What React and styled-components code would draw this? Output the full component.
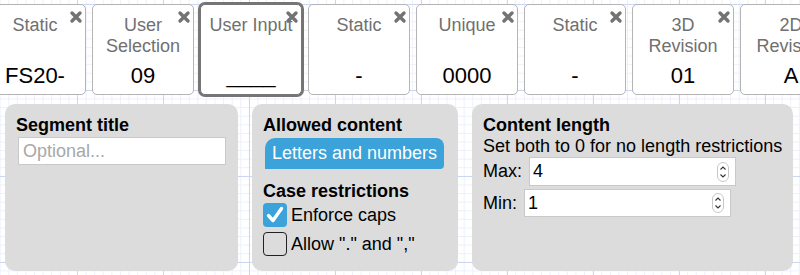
import styled, { createGlobalStyle } from "styled-components";

const GlobalStyle = createGlobalStyle`
  html, body {
    margin: 0;
    height: 100%;
  }
  body {
    font-family: "Liberation Sans", Arial, sans-serif;
    background-color: #fff;
    background-image:
      linear-gradient(#cbd6f3 1px, transparent 1px),
      linear-gradient(90deg, #cbd6f3 1px, transparent 1px),
      linear-gradient(#edf0fb 1px, transparent 1px),
      linear-gradient(90deg, #edf0fb 1px, transparent 1px);
    background-size: 86px 86px, 86px 86px, 8.6px 8.6px, 8.6px 8.6px;
    background-position: 77px 4px;
    overflow: hidden;
  }
`;

const segments = [
  { title: "Static", value: "FS20-" },
  { title: "User Selection", value: "09" },
  { title: "User Input", value: "____", selected: true },
  { title: "Static", value: "-" },
  { title: "Unique", value: "0000" },
  { title: "Static", value: "-" },
  { title: "3D Revision", value: "01" },
  { title: "2D Revision", value: "A" },
];

const Page = styled.div`
  padding-top: 4px;
`;

const SegmentRow = styled.div`
  display: flex;
  gap: 6px;
  margin-left: -16px;
`;

const Card = styled.div`
  position: relative;
  flex-shrink: 0;
  box-sizing: border-box;
  width: 102px;
  height: 91px;
  padding: 10px 6px 5px;
  display: flex;
  flex-direction: column;
  align-items: center;
  justify-content: space-between;
  background: #fff;
  border: 1px solid ${(p) => (p.$selected ? "#757575" : "#b4b4b4")};
  border-radius: 5px;
  box-shadow: ${(p) => (p.$selected ? "0 0 0 2px #757575" : "none")};
`;

const CardTitle = styled.div`
  color: #707070;
  font-size: 18px;
  line-height: 21px;
  text-align: center;
`;

const CardValue = styled.div`
  color: #000;
  font-size: 22px;
  line-height: 26px;
  white-space: nowrap;
`;

const Close = styled.svg`
  position: absolute;
  top: 4px;
  right: 1px;
`;

const PanelRow = styled.div`
  display: flex;
  gap: 14px;
  padding: 9px 0 0 5px;
`;

const Panel = styled.div`
  box-sizing: border-box;
  width: ${(p) => p.$width}px;
  height: 167px;
  padding: 11px;
  background: #dcdcdc;
  border-radius: 10px;
  font-size: 18px;
  line-height: 21px;
  color: #000;
`;

const Heading = styled.div`
  font-weight: bold;
  margin-top: ${(p) => p.$gap || 0}px;
`;

const Note = styled.div`
  white-space: nowrap;
`;

const TextInput = styled.input`
  box-sizing: border-box;
  display: block;
  width: 208px;
  height: 28px;
  margin: 1px 0 0 2px;
  padding: 0 4px;
  border: 1px solid #c9c9c9;
  background: #fff;
  font: 18px "Liberation Sans", Arial, sans-serif;
  outline: none;
  &::placeholder {
    color: #a8a8a8;
  }
`;

const Pill = styled.div`
  box-sizing: border-box;
  width: 179px;
  height: 31px;
  margin: 2px 0 0 2px;
  padding-left: 7px;
  display: flex;
  align-items: center;
  background: #3ba2da;
  color: #fff;
  border-radius: 10px 8px 4px 0;
`;

const CheckRow = styled.div`
  display: flex;
  align-items: center;
  gap: 4px;
  margin-top: ${(p) => p.$gap}px;
`;

const Box = styled.span`
  box-sizing: border-box;
  width: 24px;
  height: 24px;
  border-radius: 4px;
  display: flex;
  align-items: center;
  justify-content: center;
  background: ${(p) => (p.$checked ? "#3ba2da" : "transparent")};
  border: ${(p) => (p.$checked ? "none" : "1.5px solid #222")};
`;

const LengthRow = styled.div`
  display: flex;
  align-items: center;
  gap: 7px;
  margin-top: ${(p) => p.$gap}px;
`;

const NumberBox = styled.div`
  box-sizing: border-box;
  width: 207px;
  height: ${(p) => p.$h}px;
  display: flex;
  align-items: center;
  background: #fff;
  border: 1px solid #c9c9c9;
  padding-right: 6px;
`;

const NumberField = styled.input`
  flex: 1;
  min-width: 0;
  border: none;
  outline: none;
  background: transparent;
  padding: 0 3px;
  font: 18px "Liberation Sans", Arial, sans-serif;
  color: #000;
`;

const CloseIcon = () => (
  <Close width="16" height="16" viewBox="0 0 16 16">
    <path d="M4 4 L12 12 M12 4 L4 12" stroke="#737373" strokeWidth="3.4" strokeLinecap="round" />
  </Close>
);

const Check = () => (
  <svg width="20" height="20" viewBox="0 0 20 20">
    <path d="M3.5 10.5 L8 15.5 L16.5 3.5" fill="none" stroke="#fff" strokeWidth="3.4" strokeLinecap="round" strokeLinejoin="round" />
  </svg>
);

const Spinner = () => (
  <svg width="12" height="20" viewBox="0 0 12 20">
    <rect x="0.5" y="0.5" width="11" height="19" rx="5.5" fill="#fff" stroke="#c7c7c7" />
    <path d="M3.5 7.5 L6 5 L8.5 7.5 M3.5 12.5 L6 15 L8.5 12.5" fill="none" stroke="#333" strokeWidth="1.1" />
  </svg>
);

const LengthInput = ({ label, value, h, gap }) => (
  <LengthRow $gap={gap}>
    <span>{label}</span>
    <NumberBox $h={h}>
      <NumberField defaultValue={value} />
      <Spinner />
    </NumberBox>
  </LengthRow>
);

export default function App() {
  return (
    <Page>
      <GlobalStyle />
      <SegmentRow>
        {segments.map((seg, i) => (
          <Card key={i} $selected={seg.selected}>
            <CardTitle>{seg.title}</CardTitle>
            <CardValue>{seg.value}</CardValue>
            <CloseIcon />
          </Card>
        ))}
      </SegmentRow>
      <PanelRow>
        <Panel $width={233}>
          <Heading>Segment title</Heading>
          <TextInput placeholder="Optional..." />
        </Panel>
        <Panel $width={206}>
          <Heading>Allowed content</Heading>
          <Pill>Letters and numbers</Pill>
          <Heading $gap={12}>Case restrictions</Heading>
          <CheckRow $gap={1}>
            <Box $checked>
              <Check />
            </Box>
            Enforce caps
          </CheckRow>
          <CheckRow $gap={5}>
            <Box />
            Allow "." and ","
          </CheckRow>
        </Panel>
        <Panel $width={321}>
          <Heading>Content length</Heading>
          <Note>Set both to 0 for no length restrictions</Note>
          <LengthInput label="Max:" value="4" h={29} gap={0} />
          <LengthInput label="Min:" value="1" h={28} gap={3} />
        </Panel>
      </PanelRow>
    </Page>
  );
}
